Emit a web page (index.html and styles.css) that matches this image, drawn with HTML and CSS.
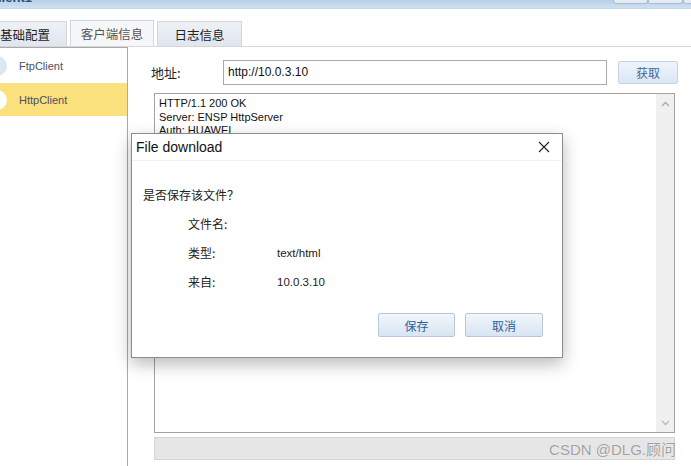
FILE: index.html
```html
<!DOCTYPE html>
<html>
<head>
<meta charset="utf-8">
<link rel="stylesheet" href="styles.css">
</head>
<body>
<div class="app">
  <div class="titlebar">
    <span class="title-text">lient1</span>
    <div class="winbtns"><span class="wb"></span><span class="wb"></span><span class="wb last"></span></div>
  </div>
  <div class="tabs">
    <div class="tab tab-first">基础配置</div>
    <div class="tab tab-active">客户端信息</div>
    <div class="tab">日志信息</div>
  </div>
  <div class="main">
    <div class="side">
      <div class="side-row"><span class="dot dot-blue"></span><span class="side-label">FtpClient</span></div>
      <div class="side-row side-sel"><span class="dot dot-white"></span><span class="side-label">HttpClient</span></div>
    </div>
    <div class="content">
      <div class="addr">
        <span class="addr-label">地址:</span>
        <div class="addr-input">http://10.0.3.10</div>
        <div class="btn-get">获取</div>
      </div>
      <div class="output">
        <div class="output-text">HTTP/1.1 200 OK<br>Server: ENSP HttpServer<br>Auth: HUAWEI</div>
        <div class="scroll">
          <svg class="chev" width="9" height="6" viewBox="0 0 9 6"><polyline points="1,5 4.5,1.5 8,5" fill="none" stroke="#a8a8a8" stroke-width="1.3"/></svg>
          <svg class="chev" width="9" height="6" viewBox="0 0 9 6"><polyline points="1,1 4.5,4.5 8,1" fill="none" stroke="#b8b8b8" stroke-width="1.3"/></svg>
        </div>
      </div>
      <div class="status"><span class="watermark">CSDN @DLG.顾问</span></div>
    </div>
  </div>

  <div class="dialog">
    <div class="dlg-title">
      <span class="dlg-title-text">File download</span>
      <svg class="dlg-close" width="12" height="12" viewBox="0 0 12 12"><path d="M1 1 L11 11 M11 1 L1 11" stroke="#222" stroke-width="1.1" fill="none"/></svg>
    </div>
    <div class="dlg-body">
      <div class="dlg-question">是否保存该文件？</div>
      <div class="dlg-row"><span class="dlg-key">文件名:</span><span class="dlg-val"></span></div>
      <div class="dlg-row"><span class="dlg-key">类型:</span><span class="dlg-val">text/html</span></div>
      <div class="dlg-row"><span class="dlg-key">来自:</span><span class="dlg-val">10.0.3.10</span></div>
      <div class="dlg-buttons">
        <div class="dlg-btn">保存</div>
        <div class="dlg-btn dlg-btn-wide">取消</div>
      </div>
    </div>
  </div>
</div>
</body>
</html>
```

FILE: styles.css
```css
* { box-sizing: border-box; }
html, body {
  margin: 0;
  padding: 0;
  background: #ffffff;
}
body {
  width: 691px;
  height: 466px;
  overflow: hidden;
  font-family: "Liberation Sans", "Noto Sans CJK SC", sans-serif;
  color: #222;
}
.app {
  position: relative;
  width: 691px;
  height: 466px;
  display: flex;
  flex-direction: column;
}
.titlebar {
  height: 9px;
  background: linear-gradient(#b9d0e8, #cfe0f1);
  border-bottom: 1px solid #c4d6ea;
  display: flex;
  overflow: hidden;
  flex: none;
}
.title-text {
  font-weight: bold;
  font-size: 13px;
  line-height: 13px;
  margin-top: -9px;
  color: #2a4a78;
  margin-left: -2px;
}
.winbtns {
  margin-left: auto;
  margin-right: -2px;
  display: flex;
  height: 5px;
  margin-top: -1px;
}
.wb {
  width: 35px;
  border: 1px solid #a9bcd0;
  border-top: none;
  background: #e3ecf6;
  border-radius: 0 0 3px 3px;
}
.wb.last { width: 10px; }
.tabs {
  flex: none;
  margin-top: 11px;
  height: 27px;
  display: flex;
  align-items: flex-end;
  border-bottom: 1px solid #d6d6d6;
  gap: 3px;
}
.tab {
  height: 25px;
  width: 85px;
  border: 1px solid #d2d6da;
  border-bottom: none;
  background: linear-gradient(#eef2f6, #dfe6ee);
  font-family: "Noto Sans CJK SC", sans-serif;
  font-size: 12.5px;
  display: flex;
  align-items: center;
  justify-content: center;
  color: #222;
}
.tab-first {
  width: 70px;
  margin-left: -3px;
  justify-content: flex-start;
  padding-left: 2px;
}
.tab-active {
  height: 26px;
  background: #f6f7f8;
  color: #555;
  width: 84px;
}
.main {
  flex: 1;
  display: flex;
  min-height: 0;
}
.side {
  width: 128px;
  flex: none;
  border-top: 1px solid #a9a9a9;
  border-right: 1px solid #a9a9a9;
  padding-top: 1px;
}
.side-row {
  height: 34px;
  display: flex;
  align-items: center;
  position: relative;
}
.side-sel {
  background: #fbe07e;
  height: 33px;
}
.dot {
  width: 20px;
  height: 20px;
  border-radius: 50%;
  margin-left: -13px;
  flex: none;
}
.dot-blue { background: #dce7f2; }
.dot-white { background: #ffffff; }
.side-label {
  margin-left: 12px;
  font-size: 11px;
  color: #4a5262;
}
.content {
  flex: 1;
  padding: 13px 14px 0 23px;
  display: flex;
  flex-direction: column;
}
.addr {
  display: flex;
  align-items: center;
  height: 25px;
}
.addr-label {
  width: 72px;
  font-family: "Noto Sans CJK SC", sans-serif;
  font-size: 13px;
  color: #222;
}
.addr-input {
  width: 384px;
  height: 25px;
  border: 1px solid #a9a9a9;
  font-size: 12px;
  line-height: 22px;
  padding-left: 4px;
  color: #111;
}
.btn-get {
  margin-left: 11px;
  width: 60px;
  height: 23px;
  border: 1px solid #c6d4e3;
  border-radius: 2px;
  background: linear-gradient(#eef4fa, #dae7f4);
  font-family: "Noto Sans CJK SC", sans-serif;
  font-size: 12px;
  color: #3e68a0;
  display: flex;
  align-items: center;
  justify-content: center;
}
.output {
  margin-top: 8px;
  margin-left: 3px;
  width: 521px;
  height: 340px;
  border: 1px solid #a3a3a3;
  display: flex;
}
.output-text {
  flex: 1;
  font-size: 11px;
  line-height: 13.5px;
  padding: 3px 0 0 4px;
  color: #111;
}
.scroll {
  width: 18px;
  background: #f0f0f0;
  display: flex;
  flex-direction: column;
  justify-content: space-between;
  align-items: center;
  padding: 7px 0 6px;
}
.chev { display: block; }
.status {
  margin-top: 4px;
  margin-left: 3px;
  width: 521px;
  height: 23px;
  background: #e6e6e6;
  border: 1px solid #d4d4d4;
  display: flex;
  justify-content: flex-end;
  align-items: center;
}
.watermark {
  font-size: 15px;
  color: #a0a0a0;
  margin-right: -2px;
  white-space: nowrap;
  text-shadow: 0 0 1px #ffffff;
}
.dialog {
  position: absolute;
  left: 131px;
  top: 133px;
  width: 432px;
  height: 225px;
  background: #ffffff;
  border: 1px solid #8c8c8c;
  box-shadow: 0 6px 16px rgba(0,0,0,0.28);
  display: flex;
  flex-direction: column;
}
.dlg-title {
  height: 27px;
  display: flex;
  align-items: center;
  border-bottom: 1px solid #f3f3f3;
  padding: 0 12px 0 4px;
}
.dlg-title-text {
  font-size: 14px;
  color: #111;
}
.dlg-close { margin-left: auto; }
.dlg-body {
  padding: 26px 19px 0 11px;
  font-family: "Noto Sans CJK SC", sans-serif;
  font-size: 12px;
  color: #222;
}
.dlg-question {
  height: 16px;
  line-height: 16px;
  font-size: 12px;
}
.dlg-row {
  height: 29px;
  display: flex;
  align-items: center;
  padding-left: 45px;
}
.dlg-row:nth-child(2) { margin-top: 6px; }
.dlg-key { width: 89px; }
.dlg-val {
  font-family: "Liberation Sans", sans-serif;
  font-size: 11.5px;
  color: #222;
}
.dlg-buttons {
  margin-top: 17px;
  display: flex;
  justify-content: flex-end;
  gap: 10px;
}
.dlg-btn {
  width: 77px;
  height: 24px;
  border: 1px solid #b9c9da;
  border-radius: 2px;
  background: linear-gradient(#f1f6fb, #d8e5f2);
  color: #2f5f9a;
  font-size: 12px;
  display: flex;
  align-items: center;
  justify-content: center;
}
.dlg-btn-wide { width: 78px; }
```
